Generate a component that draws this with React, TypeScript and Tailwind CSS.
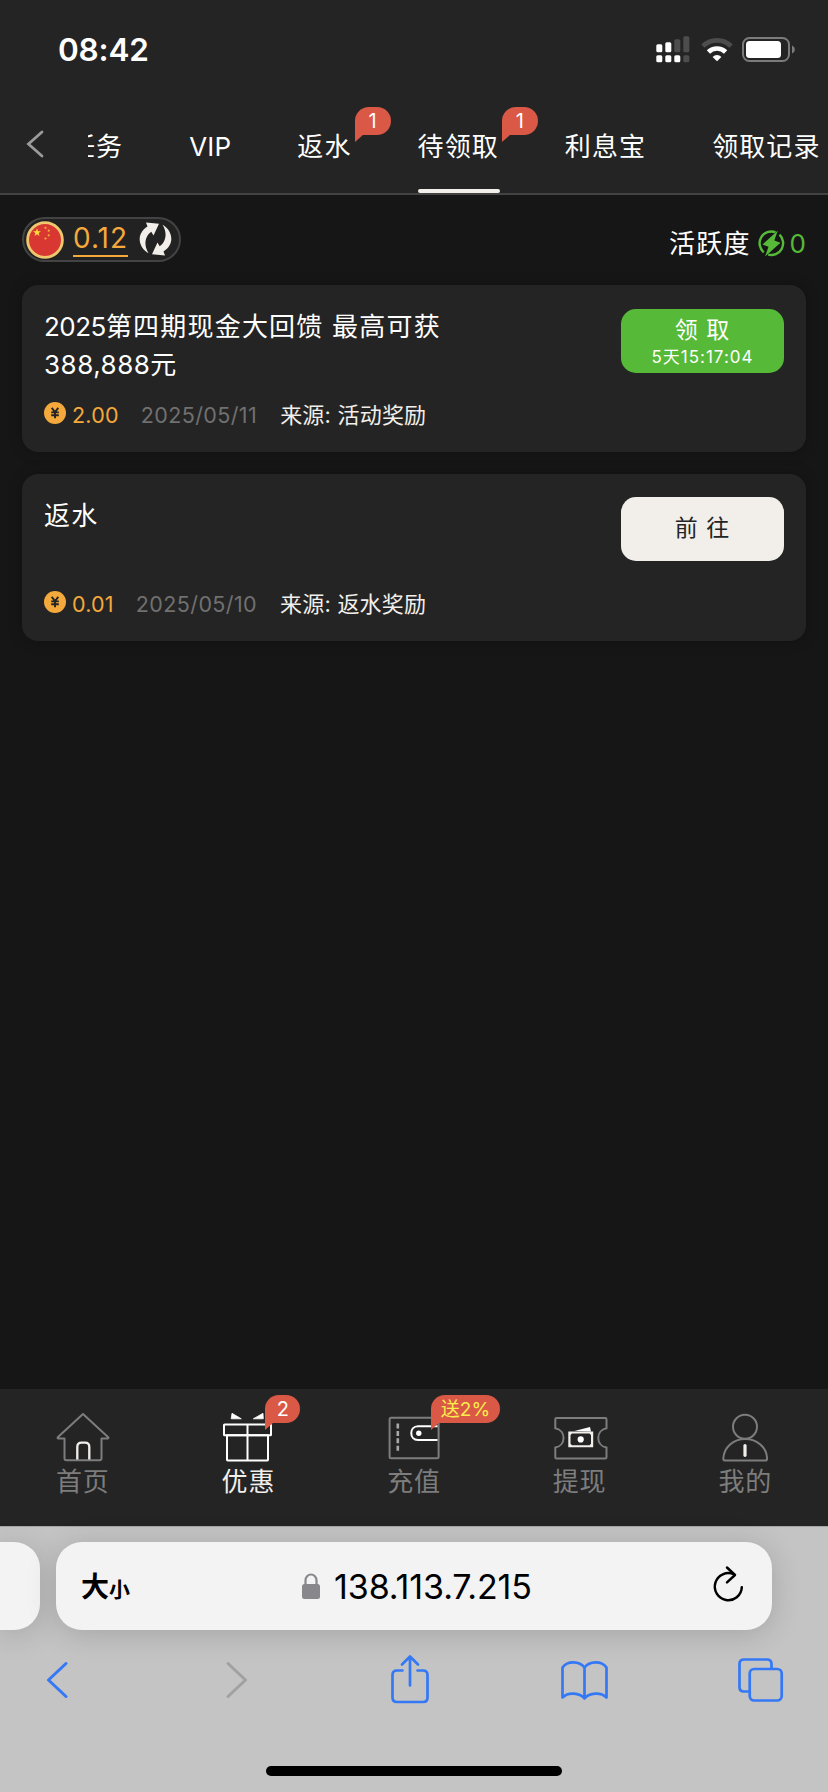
import React from 'react';

const TABS = [
    { id: 'task', label: '任务' },
    { id: 'vip', label: 'VIP' },
    { id: 'rebate', label: '返水', badge: '1' },
    { id: 'pending', label: '待领取', badge: '1', active: true },
    { id: 'interest', label: '利息宝' },
    { id: 'records', label: '领取记录' },
];

// --- Shared bits ---

interface BadgeProps {
    children: React.ReactNode;
    className?: string;
}

const Badge: React.FC<BadgeProps> = ({ children, className = '' }) => (
    <span className={`absolute flex h-7 items-center justify-center rounded-full rounded-bl-none bg-[#d95946] leading-none tracking-normal ${className}`}>
        {children}
        <svg className="absolute left-0 top-[27px]" width="9" height="8" viewBox="0 0 9 8">
            <path d="M0 0h9L0 8z" fill="#d95946" />
        </svg>
    </span>
);

const Coin = () => (
    <svg width="22" height="22" viewBox="0 0 22 22" className="mb-[5px]">
        <circle cx="11" cy="11" r="11" fill="#f3a93c" />
        <path d="M7.7 5.8 11 10l3.3-4.2M11 10v6.3M7.2 10.4h7.6M7.2 13.2h7.6" fill="none" stroke="#242424" strokeWidth="1.9" />
    </svg>
);

// --- Status bar ---

const StatusBar = () => (
    <div className="flex h-[99px] items-center justify-between pl-[58px] pr-[33px]">
        <span className="text-[31.5px] font-semibold tracking-[-0.2px] text-white">08:42</span>
        <div className="flex items-center gap-[11px]">
            <svg width="34" height="27" viewBox="0 0 34 27">
                <g fill="#fff">
                    <rect x="0.3" y="8.3" width="6" height="8" rx="1.5" />
                    <rect x="9.3" y="6.3" width="6" height="10" rx="1.5" />
                    <rect x="0.3" y="19.3" width="6" height="7" rx="1.5" />
                    <rect x="9.3" y="19.3" width="6" height="7" rx="1.5" />
                    <rect x="18.3" y="19.3" width="6" height="7" rx="1.5" />
                </g>
                <g fill="#4d4d4d">
                    <rect x="18.3" y="3.3" width="6" height="13" rx="1.5" />
                    <rect x="27.3" y="0.3" width="6" height="16" rx="1.5" />
                    <rect x="27.3" y="19.3" width="6" height="7" rx="1.5" />
                </g>
            </svg>
            <svg width="32" height="25" viewBox="0 0 32 25" fill="none">
                <path d="M1.9 9.2a20 20 0 0 1 28.2 0" stroke="#4d4d4d" strokeWidth="4.6" />
                <path d="M7.4 15a12.2 12.2 0 0 1 17.2 0" stroke="#fff" strokeWidth="4.6" />
                <path d="M16 24.3l-4.4-4.4a6.2 6.2 0 0 1 8.8 0z" fill="#fff" />
            </svg>
            <svg width="53" height="25" viewBox="0 0 53 25" className="-ml-[2px]">
                <rect x="1" y="1" width="46" height="23" rx="6.5" fill="none" stroke="#7b7b7b" strokeWidth="2" />
                <rect x="4" y="4" width="35" height="17" rx="3.5" fill="#fff" />
                <path d="M50 8.5c1.7.7 2.8 2.2 2.8 4s-1.1 3.3-2.8 4z" fill="#7b7b7b" />
            </svg>
        </div>
    </div>
);

// --- Top tabs ---

const TabBar = () => (
    <div className="flex h-24 border-b-2 border-[#434343]">
        <div className="flex w-[88px] shrink-0 items-center pb-1 pl-[26px]">
            <svg width="18" height="28" viewBox="0 0 18 28" fill="none">
                <path d="M16 2 2.5 14 16 26" stroke="#9b9b9b" strokeWidth="2.8" strokeLinecap="round" />
            </svg>
        </div>
        <div className="flex min-w-0 flex-1 overflow-x-clip">
            <div className="-ml-[19px] flex shrink-0 gap-[66px]">
                {TABS.map(tab => (
                    <div key={tab.id} className="relative flex items-center whitespace-nowrap text-[26px] tracking-[1.1px]">
                        {tab.id === 'vip' ? <span className="tracking-[0.2px]">{tab.label}</span> : tab.label}
                        {tab.badge && <Badge className="-right-[39px] top-[8px] w-[36px] text-[20px]">{tab.badge}</Badge>}
                        {tab.active && <span className="absolute bottom-0 left-0 h-1 w-[82px] rounded-full bg-[#f2efeb]" />}
                    </div>
                ))}
            </div>
        </div>
    </div>
);

// --- Balance row ---

const BalanceRow = () => (
    <div className="flex h-[46px] items-start justify-between">
        <div className="flex h-[45px] w-[159px] items-center rounded-full border-2 border-[#434343] bg-[#222222] pl-[2px]">
            <svg width="38" height="38" viewBox="0 0 38 38">
                <circle cx="19" cy="19" r="17.4" fill="#d93832" stroke="#efc76c" strokeWidth="2.8" />
                <path d="m11 7.3 1 2.9h3l-2.4 1.8.9 2.9-2.5-1.7-2.5 1.7.9-2.9L7 10.2h3z" fill="#fbe13a" />
                <circle cx="19.5" cy="6.8" r="1.1" fill="#f3b13c" />
                <circle cx="22.7" cy="9.7" r="1.1" fill="#f3b13c" />
                <circle cx="22.7" cy="14.3" r="1.1" fill="#f3b13c" />
                <circle cx="19.5" cy="17.5" r="1.1" fill="#f3b13c" />
            </svg>
            <span className="ml-[9px] mt-[1px] h-[34px] w-[55px] border-b-2 border-[#f3a93c] text-[28px] leading-[31px] tracking-[1px] text-[#f3a93c]">0.12</span>
            <svg className="mb-px ml-[11px]" width="33" height="34" viewBox="0 0 33 34" fill="#f2efeb">
                <path d="M7 .5 20 1.8 14.5 13.5 12.3 9.8C6.8 13.5 3.8 22 9.5 31.2-.5 25.5-3.5 12 8.5 4.5z" />
                <path d="M26 33.5 13 32.2 18.5 20.5 20.7 24.2C26.2 20.5 29.2 12 23.5 2.8 33.5 8.5 36.5 22 24.5 29.5z" />
            </svg>
        </div>
        <div className="mt-[7px] flex items-center text-[26px]">
            <span className="tracking-[1.2px]">活跃度</span>
            <svg className="ml-[7px]" width="27" height="27" viewBox="0 0 27 27">
                <g fill="none" stroke="#56ba38" strokeWidth="2.4">
                    <path d="M17.5 2.2A11.8 11.8 0 0 0 5.8 22.3" />
                    <path d="M21.5 4.7A11.8 11.8 0 0 1 10.2 24.6" />
                </g>
                <path d="M19.8.5 4.5 14.5l6 2.2-3.4 9.8L22.5 12.7l-6.2-2.1z" fill="#56ba38" />
            </svg>
            <span className="ml-[5px] text-[#56ba38]">0</span>
        </div>
    </div>
);

// --- Reward cards ---

interface RewardCardProps {
    title: React.ReactNode;
    amount: string;
    date: string;
    source: string;
    button: React.ReactNode;
}

const RewardCard: React.FC<RewardCardProps> = ({ title, amount, date, source, button }) => (
    <div className="flex h-[167px] flex-col justify-between rounded-2xl bg-[#242424] px-[22px] pb-5 pt-[23px] shadow-[0_0_14px_rgba(0,0,0,0.25)]">
        <div className="flex items-start justify-between">
            <div className="text-[26px] leading-[38px] tracking-[1.2px]">{title}</div>
            {button}
        </div>
        <div className="flex h-[34px] items-center text-[21.5px]">
            <Coin />
            <span className="ml-[6px] tracking-[0.2px] text-[#f3a93c]">{amount}</span>
            <span className="ml-[22px] tracking-[0.4px] text-[#707070]">{date}</span>
            <span className="ml-[23px] text-[22px] tracking-[0.2px] text-[#f2efeb]">来源: {source}</span>
        </div>
    </div>
);

// --- Bottom navigation ---

const HomeIcon = () => (
    <svg width="56" height="56" viewBox="0 0 56 56" fill="none" strokeWidth="2" strokeLinejoin="round" strokeLinecap="round">
        <path d="M28 6 2.8 29.2c-.5.6-.2 1.2.6 1.2h6.1v19.8c0 1.2.8 2 2 2h33c1.2 0 2-.8 2-2V30.4h6.1c.8 0 1.1-.6.6-1.2z" stroke="#7d7d7d" />
        <path d="M22.3 51.5V39c0-3 1.5-4.4 4.2-4.4h3.6c2.7 0 4.2 1.4 4.2 4.4v12.5" stroke="#f2efeb" strokeLinecap="butt" strokeWidth="2.3" />
    </svg>
);

const GiftIcon = () => (
    <svg width="56" height="56" viewBox="0 0 56 56" fill="none" stroke="#fff" strokeWidth="2" strokeLinejoin="round">
        <rect x="4" y="16.5" width="47" height="10.8" rx="0.6" />
        <path d="M7 27.3h41v24.5c0 .5-.3.7-.7.7H7.7c-.4 0-.7-.2-.7-.7zM27.5 16.5v36" />
        <path d="M12 5.3 21.3 10.8H11.2z M43 5.3 33.3 10.8h10z" fill="#fff" strokeWidth="0.8" />
    </svg>
);

const WalletIcon = () => (
    <svg width="56" height="56" viewBox="0 0 56 56" fill="none" strokeWidth="2">
        <rect x="3.6" y="9.7" width="49" height="40.5" rx="1.5" stroke="#7d7d7d" />
        <path d="M11.8 15.5V43" stroke="#a8a8a8" strokeWidth="2.6" strokeDasharray="5 2.4" />
        <path d="M51.5 18.2H32c-9 0-9 13.8 0 13.8h19.5" stroke="#fff" />
        <circle cx="32.8" cy="25.2" r="2.7" fill="#fff" />
    </svg>
);

const TicketIcon = () => (
    <svg width="56" height="56" viewBox="0 0 56 56" fill="none">
        <path d="M3.3 20.2v-9c0-.7.5-1.2 1.2-1.2h48.8c.7 0 1.2.5 1.2 1.2v9c-11 2-11 17.4 0 19.4v9.7c0 .7-.5 1.2-1.2 1.2H4.5c-.7 0-1.2-.5-1.2-1.2v-9.7c11-2 11-17.4 0-19.4z" stroke="#7d7d7d" strokeWidth="2" />
        <path d="M22.5 23 38 19l1 4.5" fill="#fff" />
        <path fillRule="evenodd" d="M16.3 23.5h24.9v15.8H16.3zM20 25.6l-1.5 1.5v8.6l1.5 1.5h17.5l1.5-1.5v-8.6l-1.5-1.5z" fill="#f2efeb" />
        <circle cx="28.7" cy="31.4" r="3.1" fill="#fff" />
    </svg>
);

const UserIcon = () => (
    <svg width="56" height="56" viewBox="0 0 56 56" fill="none" stroke="#7d7d7d" strokeWidth="2">
        <circle cx="28" cy="18.7" r="12" />
        <path d="M6.3 50.5C6.8 39 16.5 30.9 28.2 30.9S49.6 39 50.1 50.5c0 1.2-.7 2.1-1.8 2.1H8.1c-1.1 0-1.8-.9-1.8-2.1z" />
        <path d="M28 37.5v9.8" stroke="#f2efeb" strokeWidth="3.2" strokeLinecap="round" />
    </svg>
);

const NAV = [
    { label: '首页', icon: <HomeIcon /> },
    { label: '优惠', icon: <GiftIcon />, active: true, badge: <Badge className="left-[45px] top-[-13px] w-[35px] text-[20px]">2</Badge> },
    { label: '充值', icon: <WalletIcon />, badge: <Badge className="left-[45px] top-[-13px] w-[69px] text-[19px] text-[#f9ee4b]">送2%</Badge> },
    { label: '提现', icon: <TicketIcon /> },
    { label: '我的', icon: <UserIcon /> },
];

const BottomNav = () => (
    <nav className="grid h-[137px] grid-cols-5 bg-[#242424] pt-[19px]">
        {NAV.map(item => (
            <div key={item.label} className="flex flex-col items-center">
                <div className="relative">
                    {item.icon}
                    {item.badge}
                </div>
                <span className={`mt-px text-[26px] leading-[34px] tracking-[0.8px] ${item.active ? 'text-[#f2efeb]' : 'text-[#7d7d7d]'}`}>
                    {item.label}
                </span>
            </div>
        ))}
    </nav>
);

// --- Browser chrome ---

const BrowserBar = () => (
    <div className="flex h-[266px] flex-col border-t border-[#a5a5a5] bg-[#c4c4c4] pt-[15px]">
        <div className="flex h-[88px] gap-4">
            <div className="w-10 rounded-r-[26px] bg-[#f3f3f3] shadow-[0_4px_30px_rgba(0,0,0,0.16)]" />
            <div className="flex w-[716px] items-center rounded-[26px] bg-[#f3f3f3] pl-[25px] pr-[28px] text-black shadow-[0_4px_30px_rgba(0,0,0,0.16)]">
                <span className="flex w-[60px] items-baseline pt-0.5 font-bold leading-none">
                    <span className="text-[28px]">大</span>
                    <span className="text-[21px]">小</span>
                </span>
                <span className="ml-[161px] flex items-center">
                    <svg width="18" height="26" viewBox="0 0 18 26">
                        <path d="M3.5 12V7.5a5.5 6 0 0 1 11 0V12" fill="none" stroke="#88878c" strokeWidth="2.2" />
                        <rect y="11" width="18" height="15" rx="2.5" fill="#88878c" />
                    </svg>
                    <span className="ml-[14px] text-[34px] tracking-[-0.1px]">138.113.7.215</span>
                </span>
                <svg className="mb-1 ml-auto" width="32" height="38" viewBox="0 0 32 38" fill="none" stroke="#000" strokeWidth="2.5" strokeLinecap="round" strokeLinejoin="round">
                    <path d="M29.8 22.2A13.5 13.5 0 1 1 22 9.4" />
                    <path d="M15 2.5l8 7.5-8 7.3" />
                </svg>
            </div>
        </div>
        <div className="mt-5 flex h-[60px] items-center pl-[46px]">
            <svg width="22" height="38" viewBox="0 0 22 38" fill="none">
                <path d="M20 2.5 2.5 19 20 35.5" stroke="#3478f6" strokeWidth="3" strokeLinecap="round" strokeLinejoin="round" />
            </svg>
            <svg className="ml-[158px]" width="22" height="38" viewBox="0 0 22 38" fill="none">
                <path d="M2 2.5 19.5 19 2 35.5" stroke="#a1a1a1" strokeWidth="3" strokeLinecap="round" strokeLinejoin="round" />
            </svg>
            <svg className="mb-[2px] ml-[142px]" width="40" height="50" viewBox="0 0 40 50" fill="none" stroke="#3478f6" strokeWidth="2.7" strokeLinecap="round" strokeLinejoin="round">
                <path d="M12.5 16.5H7c-3 0-4.5 1.5-4.5 4.5v22.5c0 3 1.5 4.5 4.5 4.5h26c3 0 4.5-1.5 4.5-4.5V21c0-3-1.5-4.5-4.5-4.5h-5.5" />
                <path d="M20 31.5V2.5M12 10.5l8-8 8 8" />
            </svg>
            <svg className="ml-[130px]" width="48" height="40" viewBox="0 0 48 40" fill="none" stroke="#3478f6" strokeWidth="2.7" strokeLinecap="round" strokeLinejoin="round">
                <path d="M24.5 38.5V7.5C19.5 1 7.5.5 2.5 7.5V37.500c5.500-5.500 17-5 22 1 5-6 16.500-6.500 22-1V7.500C41.500.5 29.500 1 24.500 7.500" />
            </svg>
            <svg className="ml-[130px]" width="46" height="44" viewBox="0 0 46 44" fill="none" stroke="#3478f6" strokeWidth="2.7">
                <rect x="11.7" y="11" width="32" height="31.5" rx="4.5" />
                <path d="M11.5 33.5H6c-2.500 0-4.500-1.500-4.500-4.500V6c0-3 2-4.500 4.500-4.500h23c3 0 4.500 1.500 4.500 4.500v5" />
            </svg>
        </div>
        <div className="mx-auto mt-[56px] h-2.5 w-[296px] rounded-full bg-black" />
    </div>
);

export default function App() {
    return (
        <div className="flex h-[1792px] w-[828px] flex-col overflow-hidden bg-[#161616] font-['Inter','Noto_Sans_CJK_SC',sans-serif] text-white">
            <header className="bg-[#242424]">
                <StatusBar />
                <TabBar />
            </header>

            <main className="flex flex-1 flex-col px-[22px] pt-[22px]">
                <BalanceRow />
                <div className="mt-[22px] flex flex-col gap-[22px]">
                    <RewardCard
                        title={
                            <>
                                <span className="tracking-[-0.5px]">2025</span>第四期现金大回馈 最高可获
                                <br />
                                <span className="tracking-[0.5px]">388,888</span>元
                            </>
                        }
                        amount="2.00"
                        date="2025/05/11"
                        source="活动奖励"
                        button={
                            <button className="mt-px flex h-16 w-[163px] flex-col items-center rounded-[15px] bg-[#56ba38] pt-1">
                                <span className="text-[23px] leading-[34px] tracking-[1px]">领 取</span>
                                <span className="text-[17px] leading-5 tracking-[1px]">5天15:17:04</span>
                            </button>
                        }
                    />
                    <RewardCard
                        title="返水"
                        amount="0.01"
                        date="2025/05/10"
                        source="返水奖励"
                        button={
                            <button className="flex h-16 w-[163px] items-center justify-center rounded-[15px] bg-[#f2efeb] pb-0.5 text-[23px] tracking-[1px] text-[#242424]">
                                前 往
                            </button>
                        }
                    />
                </div>
            </main>

            <BottomNav />
            <BrowserBar />
        </div>
    );
}
